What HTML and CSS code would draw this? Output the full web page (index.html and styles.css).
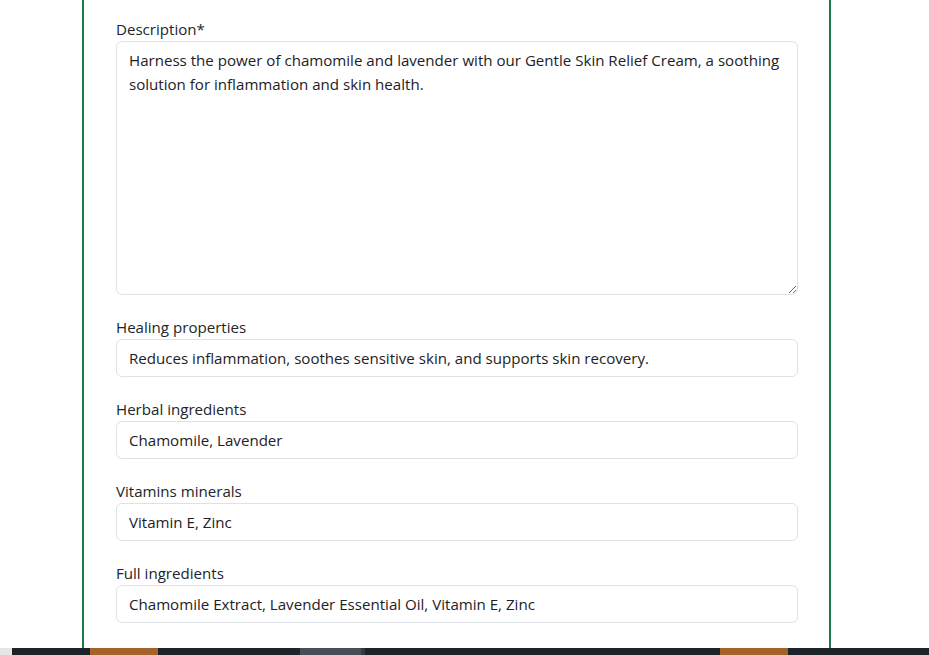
FILE: index.html
```html
<!DOCTYPE html>
<html lang="en">
<head>
<meta charset="utf-8">
<title>Edit product</title>
<link rel="stylesheet" href="styles.css">
</head>
<body>
<main class="page">
  <section class="card">
    <div class="group">
      <label class="label" for="desc">Description*</label>
      <textarea id="desc" class="control area">Harness the power of chamomile and lavender with our Gentle Skin Relief Cream, a soothing solution for inflammation and skin health.</textarea>
    </div>
    <div class="group">
      <label class="label" for="heal">Healing properties</label>
      <input id="heal" class="control" type="text" value="Reduces inflammation, soothes sensitive skin, and supports skin recovery.">
    </div>
    <div class="group">
      <label class="label" for="herb">Herbal ingredients</label>
      <input id="herb" class="control" type="text" value="Chamomile, Lavender">
    </div>
    <div class="group">
      <label class="label" for="vit">Vitamins minerals</label>
      <input id="vit" class="control" type="text" value="Vitamin E, Zinc">
    </div>
    <div class="group">
      <label class="label" for="full">Full ingredients</label>
      <input id="full" class="control" type="text" value="Chamomile Extract, Lavender Essential Oil, Vitamin E, Zinc">
    </div>
  </section>
</main>
<footer class="bar">
  <span class="seg seg-light"></span>
  <span class="seg seg-dark w78"></span>
  <span class="seg seg-orange"></span>
  <span class="seg seg-dark w142"></span>
  <span class="seg seg-grey"></span>
  <span class="seg seg-grey2"></span>
  <span class="seg seg-dark w355"></span>
  <span class="seg seg-orange"></span>
  <span class="seg seg-dark grow"></span>
</footer>
</body>
</html>
```
FILE: styles.css
```css
* { box-sizing: border-box; }
html, body { margin: 0; padding: 0; background: #fff; }
body {
  font-family: "Open Sans", "Noto Sans", sans-serif;
  font-size: 16px;
  line-height: 1.5;
  color: #212529;
  height: 655px;
  overflow: hidden;
  display: flex;
  flex-direction: column;
}
.page {
  flex: 1;
  padding: 0 98px 0 82px;
  overflow: hidden;
}
.card {
  width: 749px;
  height: 100%;
  border-left: 2px solid #1e7a4c;
  border-right: 2px solid #1e7a4c;
  padding: 17px 31px 0 32px;
}
.group { margin-bottom: 20px; }
.label {
  display: block;
  font-size: 15.1px;
  line-height: 24px;
  color: #212529;
}
.control {
  display: block;
  width: 682px;
  height: 38px;
  padding: 6px 12px;
  font: inherit;
  font-size: 15.1px;
  line-height: 24px;
  color: #1d2125;
  background: #fff;
  border: 1px solid #dee2e6;
  border-radius: 6px;
  outline: none;
}
.area {
  height: 254px;
  resize: vertical;
}
.bar {
  height: 7px;
  display: flex;
  flex-shrink: 0;
}
.seg { display: block; height: 100%; }
.seg-light { width: 12px; background: #e6e6e6; }
.seg-dark { background: #1c2329; }
.w78 { width: 78px; }
.w142 { width: 142px; }
.w355 { width: 355px; }
.grow { flex: 1; }
.seg-orange { width: 68px; background: #a5612a; }
.seg-grey { width: 61px; background: #474e55; }
.seg-grey2 { width: 4px; background: #33393f; }
```
